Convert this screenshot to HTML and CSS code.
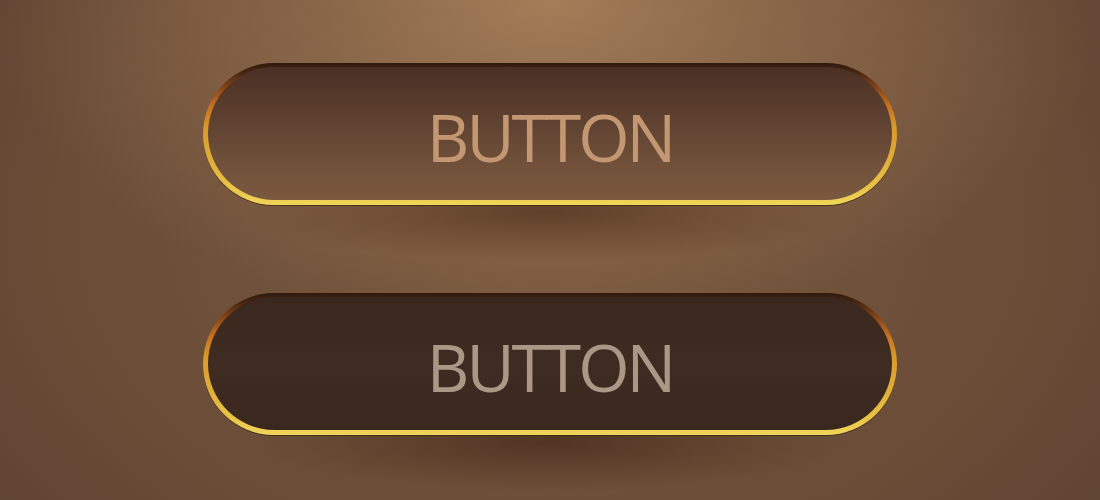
FILE: index.html
```html
<!DOCTYPE html>
<html lang="en">
<head>
  <meta charset="UTF-8">
  <meta name="viewport" content="width=device-width, initial-scale=1.0">
  <title>Gold Buttons</title>
  <link rel="stylesheet" href="styles.css">
</head>
<body>
  <div class="stage">
    <button class="gold-btn">
      <span class="face face-light">BUTTON</span>
    </button>
    <button class="gold-btn">
      <span class="face face-dark">BUTTON</span>
    </button>
  </div>
</body>
</html>
```

FILE: styles.css
```css
html, body {
  margin: 0;
  height: 100%;
}
body {
  font-family: "Open Sans", "Liberation Sans", sans-serif;
  background:
    radial-gradient(ellipse 300px 50px at 550px 212px, rgba(70, 38, 20, 0.6) 0%, rgba(70, 38, 20, 0) 100%),
    radial-gradient(ellipse 300px 50px at 550px 442px, rgba(60, 32, 18, 0.6) 0%, rgba(60, 32, 18, 0) 100%),
    radial-gradient(ellipse 560px 330px at 550px 0, #a47d58 0%, rgba(160, 122, 85, 0.55) 40%, rgba(122, 90, 64, 0) 100%),
    radial-gradient(ellipse 900px 620px at 550px 230px, #7a5a40 0%, #6a4c37 55%, #553c2d 100%);
  background-color: #5a4030;
  overflow: hidden;
}
.stage {
  display: flex;
  flex-direction: column;
  align-items: center;
  gap: 88px;
  padding-top: 63px;
}
.gold-btn {
  width: 694px;
  height: 142px;
  padding: 4px 5px 5px;
  border: none;
  border-radius: 71px;
  background: linear-gradient(to bottom,
    #2e1a0e 0%,
    #4a2612 7%,
    #8c4616 18%,
    #c27022 30%,
    #d99a2c 45%,
    #dfaa36 65%,
    #e8c446 88%,
    #f0d65a 100%);
  box-shadow: 0 1px 0 rgba(50, 26, 12, 0.6);
  cursor: pointer;
  font-family: inherit;
  display: flex;
}
.face {
  flex: 1;
  display: flex;
  align-items: center;
  justify-content: center;
  border-radius: 67px;
  font-size: 66px;
  letter-spacing: -3px;
  padding-top: 4px;
  box-sizing: border-box;
}
.face-light {
  background: linear-gradient(to bottom, #4a3024 0%, #5c3f2f 35%, #71513a 75%, #7a593f 100%);
  color: #c29772;
}
.face-dark {
  background: linear-gradient(to bottom, #3a271d 0%, #3e2b21 50%, #3a281e 100%);
  color: #aa9786;
}
```
